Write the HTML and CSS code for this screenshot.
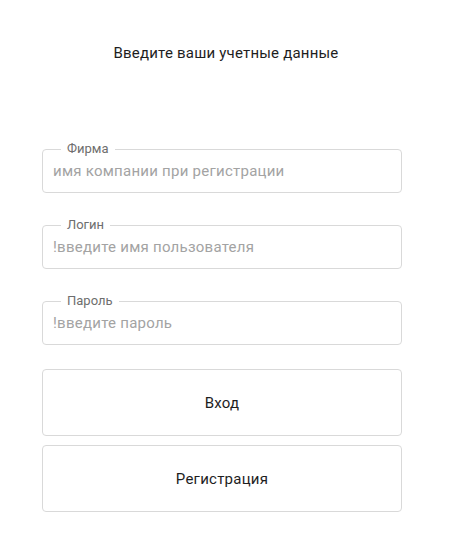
FILE: index.html
```html
<!DOCTYPE html>
<html>
	<head>
		<meta charset="utf-8">
		<title>Вход</title>
		<link rel="stylesheet" href="styles.css">
	</head>
	<body>
		<div class="login">
			<h3 class="title">Введите ваши учетные данные</h3>
			<form class="form">
				<div class="field">
					<label>Фирма</label>
					<input type="text" placeholder="имя компании при регистрации">
				</div>
				<div class="field">
					<label>Логин</label>
					<input type="text" placeholder="!введите имя пользователя">
				</div>
				<div class="field">
					<label>Пароль</label>
					<input type="password" placeholder="!введите пароль">
				</div>
				<div class="buttons">
					<button type="button" class="btn">Вход</button>
					<button type="button" class="btn">Регистрация</button>
				</div>
			</form>
		</div>
	</body>
</html>
```

FILE: styles.css
```css
* {
  padding: 0;
  margin: 0;
  box-sizing: border-box;
}

body {
  background: #fff;
  font-family: Roboto, "Noto Sans", sans-serif;
  color: #222;
  letter-spacing: 0.25px;
}

.login {
  width: 452px;
  padding-top: 43px;
}

.title {
  font-size: 15px;
  font-weight: normal;
  line-height: 20px;
  text-align: center;
  color: #1e1e1e;
  letter-spacing: 0.2px;
}

.form {
  width: 360px;
  margin: 86px 0 0 42px;
  display: flex;
  flex-direction: column;
}

.field {
  position: relative;
  height: 44px;
  border: 1px solid #d9d9d9;
  border-radius: 4px;
  margin-bottom: 32px;
}

.field label {
  position: absolute;
  left: 18px;
  top: -9px;
  padding: 0 6px;
  background: #fff;
  font-size: 13px;
  line-height: 16px;
  color: #6e6e6e;
  letter-spacing: 0;
}

.field input {
  width: 100%;
  height: 100%;
  border: 0;
  outline: none;
  background: transparent;
  padding: 0 10px;
  font-family: inherit;
  font-size: 15px;
  letter-spacing: 0.25px;
  color: #222;
}

.field input::placeholder {
  color: #a3a3a3;
}

.buttons {
  margin-top: -8px;
  display: flex;
  flex-direction: column;
  gap: 9px;
}

.btn {
  height: 67px;
  border: 1px solid #d9d9d9;
  border-radius: 4px;
  background: #fff;
  font-family: inherit;
  font-size: 15px;
  letter-spacing: 0.25px;
  color: #1e1e1e;
  cursor: pointer;
}
```
